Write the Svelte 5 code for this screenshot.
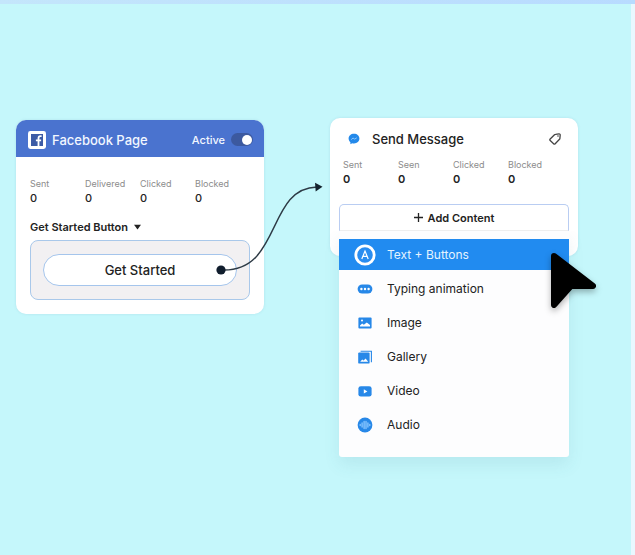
<script>
  const pageStats = [
    ['Sent', 0],
    ['Delivered', 0],
    ['Clicked', 0],
    ['Blocked', 0],
  ];
  const messageStats = [
    ['Sent', 0],
    ['Seen', 0],
    ['Clicked', 0],
    ['Blocked', 0],
  ];
  const contentTypes = [
    { id: 'text', label: 'Text + Buttons' },
    { id: 'typing', label: 'Typing animation' },
    { id: 'image', label: 'Image' },
    { id: 'gallery', label: 'Gallery' },
    { id: 'video', label: 'Video' },
    { id: 'audio', label: 'Audio' },
  ];
  let active = $state(true);
  let selected = $state('text');
</script>

{#snippet stats(items)}
  <dl class="stats">
    {#each items as [label, value]}
      <div>
        <dt>{label}</dt>
        <dd>{value}</dd>
      </div>
    {/each}
  </dl>
{/snippet}

{#snippet icon(id)}
  <svg class="icon" viewBox="0 0 22 22" aria-hidden="true">
    {#if id === 'text'}
      <circle cx="11" cy="11" r="9.2" fill="#2a8df0" stroke="#fff" stroke-width="2.8" />
      <path d="M7.8 15 11 7l3.2 8M9 12.4h4" fill="none" stroke="#fff" stroke-width="1.2" />
    {:else if id === 'typing'}
      <rect x="3.6" y="6.4" width="14.8" height="9.2" rx="4.6" fill="#2788e8" />
      <circle cx="7.4" cy="11" r="1.2" fill="#fff" />
      <circle cx="11" cy="11" r="1.2" fill="#fff" />
      <circle cx="14.6" cy="11" r="1.2" fill="#fff" />
    {:else if id === 'image'}
      <rect x="4.4" y="5.6" width="13.2" height="10.8" rx="1" fill="#2788e8" />
      <circle cx="8" cy="8.4" r="1" fill="#fff" />
      <path d="M6 14.6v-1.2l2.2-1.8 1.6 1.2 3-2.4 3.2 2.6v1.6z" fill="#fff" />
    {:else if id === 'gallery'}
      <path d="M6.6 5.2h10.8v11" fill="none" stroke="#2788e8" stroke-width="1.1" />
      <rect x="4.2" y="6.4" width="11.4" height="11.2" rx="1.2" fill="#2788e8" />
      <path d="M6.2 15.8 8.2 13.6l1.4 1 2-2 2.6 3.2z" fill="#fff" />
    {:else if id === 'video'}
      <rect x="4.4" y="6.2" width="13.2" height="10.4" rx="2.4" fill="#2788e8" />
      <path d="m9.8 9.2 3.6 2.2-3.6 2.2z" fill="#fff" />
    {:else}
      <circle cx="11" cy="11" r="7.4" fill="#2788e8" />
      <path
        d="M6.2 10.4v1.2M8.1 9v4M10.1 7.4v7.2M12 7.4v7.2M13.9 9v4M15.8 10.4v1.2"
        fill="none"
        stroke="#8cc8ff"
        stroke-width="1.3"
        stroke-linecap="round"
      />
    {/if}
  </svg>
{/snippet}

<main class="canvas">
  <section class="card page-node">
    <header class="page-head">
      <svg class="fb" viewBox="0 0 18 18" aria-hidden="true">
        <rect width="18" height="18" rx="2.4" fill="#fff" />
        <rect x="3" y="3" width="12" height="12" fill="#3c5ba6" />
        <path
          d="M13.6 5.2h-1.2c-1.3 0-1.9.8-1.9 2V15M7.900 9.300h5.200"
          fill="none"
          stroke="#fff"
          stroke-width="1.8"
        />
      </svg>
      <h2>Facebook Page</h2>
      <label class="toggle">
        Active
        <input type="checkbox" role="switch" bind:checked={active} />
      </label>
    </header>
    <div class="page-body">
      {@render stats(pageStats)}
      <button class="trigger" type="button">
        Get Started Button
        <svg class="caret" viewBox="0 0 7 6" aria-hidden="true"><path d="M0 .8h7L3.5 5.500z" fill="#222" /></svg>
      </button>
      <div class="well">
        <button class="start" type="button">Get Started</button>
      </div>
    </div>
  </section>

  <section class="card message-node">
    <header class="message-head">
      <svg class="bubble" viewBox="0 0 12 12" aria-hidden="true">
        <path
          d="M6 .8C2.8.8.6 2.9.6 5.6c0 1.500.7 2.800 1.800 3.700v1.900l1.800-.9c.6.1 1.100.2 1.800.2 3.200 0 5.400-2.200 5.400-4.900S9.200.8 6 .8z"
          fill="#2389ea"
        />
        <path d="m3.200 6.600 1.800-1.600 1.700 1.100 2.100-1.300" fill="none" stroke="#8cc6fb" stroke-width="1" />
      </svg>
      <h2>Send Message</h2>
      <svg class="tag" viewBox="0 0 12 12" aria-hidden="true">
        <path
          d="M6.5 1.3 10 .9q1.2-.1 1.200 1.100l-.3 3.400q0 .5-.4.900L6.200 10.700q-.8.800-1.600 0L1.200 7.600q-.8-.8 0-1.600L5.500 1.700q.4-.4 1-.4z"
          fill="none"
          stroke="#444"
          stroke-width="1.3"
        />
        <circle cx="9" cy="3" r=".8" fill="#444" />
      </svg>
    </header>
    {@render stats(messageStats)}
    <div class="picker">
      <button class="add" type="button">
        <svg class="plus" viewBox="0 0 9 9" aria-hidden="true">
          <path d="M4.500 0v9M0 4.500h9" stroke="#222" stroke-width="1.3" />
        </svg>
        Add Content
      </button>
      <ul class="menu">
        {#each contentTypes as type}
          <li>
            <button
              type="button"
              class:selected={selected === type.id}
              onclick={() => (selected = type.id)}
            >
              {@render icon(type.id)}
              {type.label}
            </button>
          </li>
        {/each}
      </ul>
    </div>
  </section>

  <svg class="link" viewBox="0 0 110 94" aria-hidden="true">
    <path d="M5 89C66 92 50 7 101 6" fill="none" stroke="#2d3a45" stroke-width="1.4" />
    <circle cx="5" cy="89" r="4.6" fill="#101d2d" />
    <path d="m99 1.800 7.500 4-6.800 4.600z" fill="#14232e" />
  </svg>

  <svg class="cursor" viewBox="0 0 48 58" aria-hidden="true">
    <path
      d="M5 4 44 34H22L5 53z"
      fill="#000"
      stroke="#000"
      stroke-width="6"
      stroke-linejoin="round"
    />
  </svg>
</main>

<style>
  :global(body) {
    margin: 0;
  }
  .canvas {
    position: relative;
    box-sizing: border-box;
    min-height: 100vh;
    border-top: 4px solid #bfdffb;
    background: linear-gradient(#e9f8ff, #e9f8ff) right / 4px 100% no-repeat #c5f7fb;
    border-image: linear-gradient(90deg, #c4e6fb, #b8dbff) 1;
    font-family: Inter, 'Liberation Sans', sans-serif;
    color: #222;
  }
  h2,
  dl,
  dd,
  ul {
    margin: 0;
    padding: 0;
  }
  button {
    font: inherit;
    color: inherit;
    cursor: pointer;
  }
  svg {
    display: block;
    flex: none;
  }
  .card {
    position: absolute;
    width: 248px;
    border-radius: 10px;
    background: #fff;
    box-shadow: 0 0 3px rgba(90, 150, 180, 0.2);
  }
  .page-node {
    left: 16px;
    top: 116px;
  }
  .message-node {
    left: 330px;
    top: 114px;
    box-sizing: border-box;
    padding: 0 9px 25px;
  }
  .page-head {
    display: flex;
    align-items: center;
    gap: 6px;
    height: 37px;
    padding: 2px 11px 0 12px;
    box-sizing: border-box;
    border-radius: 10px 10px 0 0;
    background: #4a73cf;
    color: #f2f7ff;
  }
  .fb {
    width: 18px;
    height: 18px;
  }
  h2 {
    flex: 1;
    font-size: 13px;
    font-weight: 500;
    line-height: 18px;
  }
  .toggle {
    display: flex;
    align-items: center;
    gap: 6px;
    font-size: 11px;
    font-weight: 500;
  }
  .toggle input {
    appearance: none;
    display: flex;
    justify-content: flex-start;
    align-items: center;
    width: 22px;
    height: 13px;
    margin: 0;
    padding: 0 1px;
    box-sizing: border-box;
    border-radius: 7px;
    background: #3c599f;
  }
  .toggle input::before {
    content: '';
    width: 10px;
    height: 10px;
    border-radius: 50%;
    background: #fff;
  }
  .toggle input:checked {
    justify-content: flex-end;
  }
  .page-body {
    padding: 20px 14px 14px;
  }
  .stats {
    display: grid;
    grid-template-columns: repeat(4, 55px);
  }
  dt {
    font-size: 9px;
    line-height: 14px;
    color: #8c8c8c;
  }
  dd {
    font-size: 11px;
    font-weight: 500;
    line-height: 14px;
  }
  .trigger {
    display: flex;
    align-items: center;
    gap: 6px;
    margin: 14px 0 5px;
    padding: 0;
    border: 0;
    background: none;
    font-size: 11px;
    font-weight: 600;
    line-height: 16px;
  }
  .caret {
    width: 7px;
    height: 6px;
  }
  .well {
    padding: 13px 12px;
    border: 1px solid #a9c8ea;
    border-radius: 8px;
    background: #f2f0f2;
  }
  .start {
    display: block;
    width: 100%;
    height: 32px;
    padding: 0;
    border: 1px solid #a5c5ec;
    border-radius: 16px;
    background: #fff;
    font-size: 13px;
    font-weight: 500;
  }
  .message-head {
    display: flex;
    align-items: center;
    padding: 12px 8px 10px 9px;
  }
  .message-head h2 {
    padding-left: 12px;
  }
  .bubble,
  .tag {
    width: 12px;
    height: 12px;
  }
  .message-node .stats {
    padding-left: 4px;
  }
  .message-node dd {
    font-weight: 600;
  }
  .picker {
    position: relative;
    margin-top: 18px;
  }
  .add {
    display: flex;
    align-items: center;
    justify-content: center;
    gap: 5px;
    width: 100%;
    height: 27px;
    padding: 0;
    border: 1px solid #b9cdf2;
    border-radius: 5px 5px 0 0;
    border-bottom-color: #eee;
    background: #fff;
    font-size: 11px;
    font-weight: 600;
  }
  .plus {
    width: 9px;
    height: 9px;
  }
  .menu {
    position: absolute;
    top: 27px;
    left: 0;
    right: 0;
    display: flex;
    flex-direction: column;
    gap: 3px;
    padding: 8px 0 17px;
    border-radius: 0 0 3px 3px;
    background: #fdfdfe;
    box-shadow: 0 8px 16px rgba(60, 120, 140, 0.1);
    clip-path: inset(0 -30px -40px);
    list-style: none;
  }
  .menu button {
    display: flex;
    align-items: center;
    gap: 11px;
    width: 100%;
    height: 31px;
    padding: 0 15px;
    border: 0;
    background: none;
    font-size: 12px;
    text-align: left;
  }
  .menu .selected {
    background: #218bf0;
    color: #e4f3ff;
  }
  .icon {
    width: 22px;
    height: 22px;
  }
  .link {
    position: absolute;
    left: 216px;
    top: 177px;
    width: 110px;
    height: 94px;
  }
  .cursor {
    position: absolute;
    left: 549px;
    top: 248px;
    width: 48px;
    height: 58px;
    filter: drop-shadow(0 3px 3px rgba(0, 0, 0, 0.3));
  }
</style>
